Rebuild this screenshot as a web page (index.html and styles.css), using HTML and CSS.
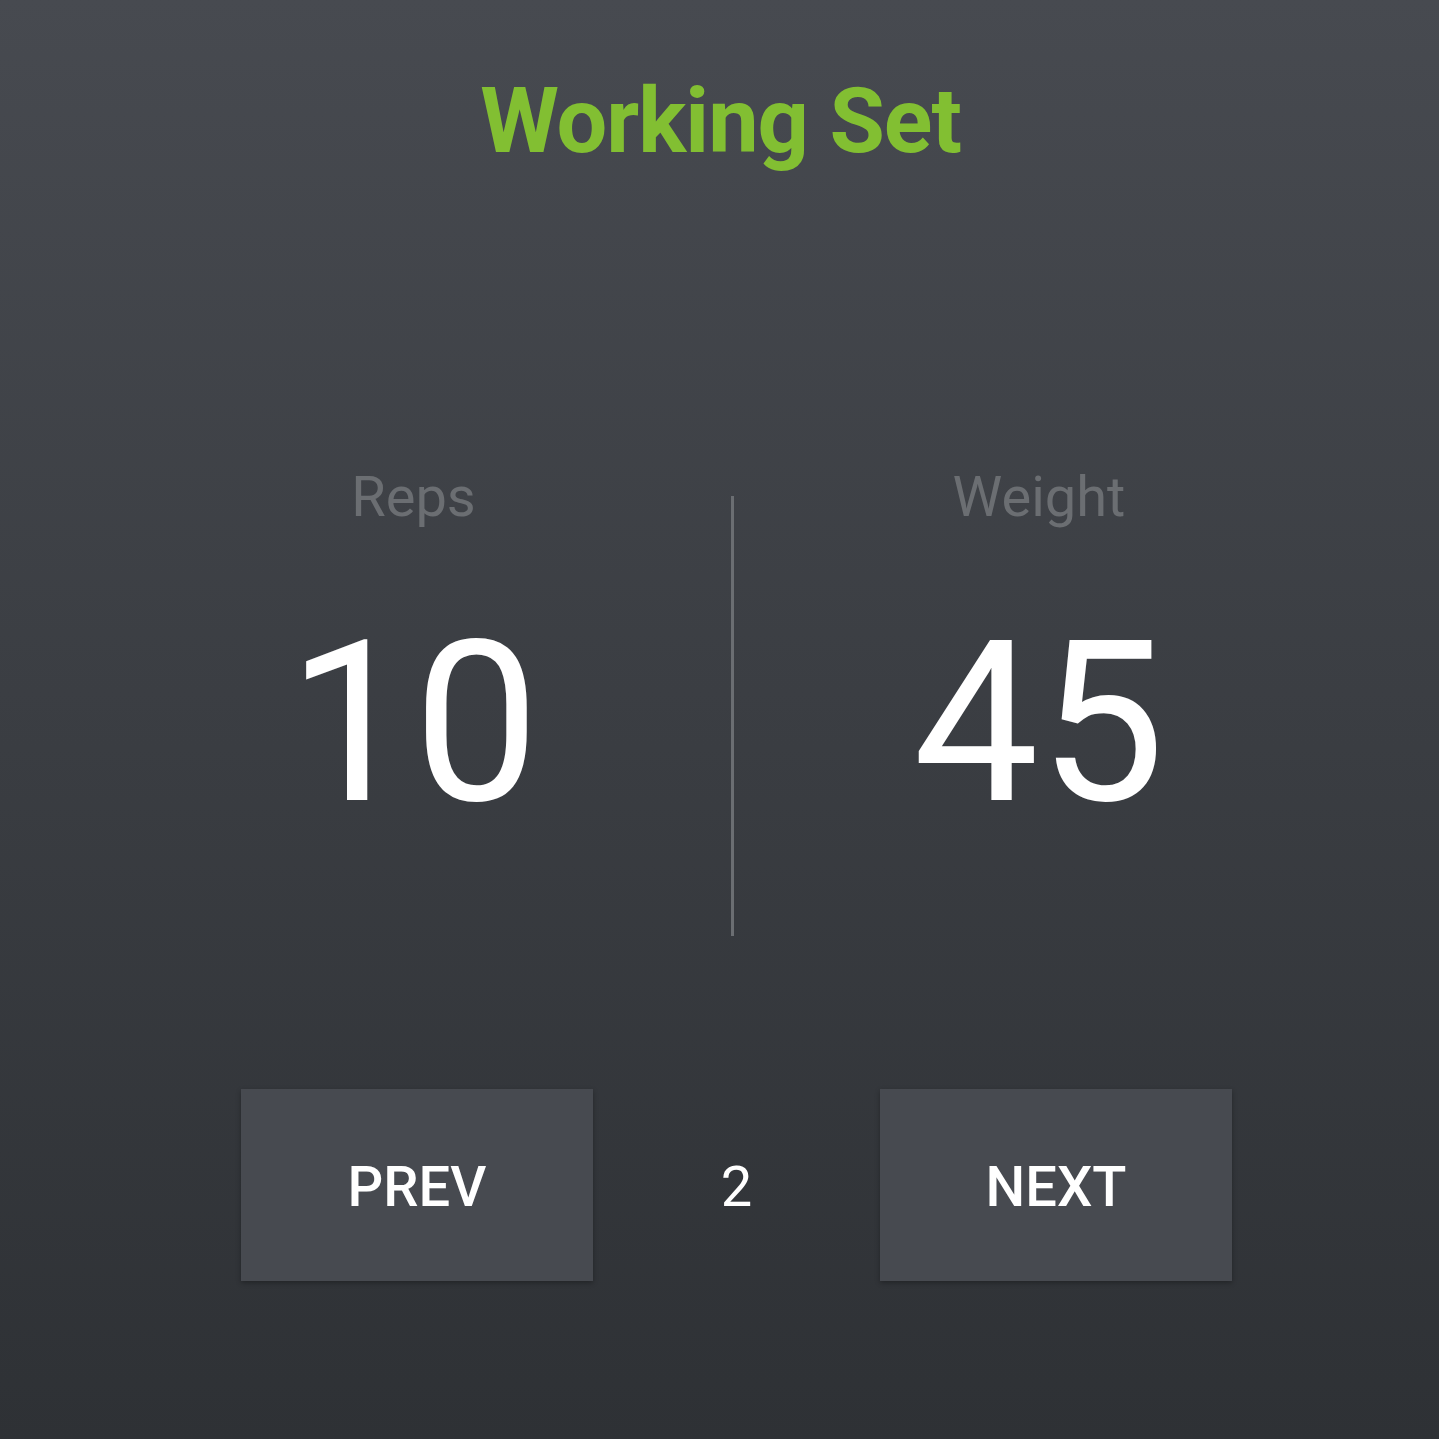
FILE: index.html
```html
<!DOCTYPE html>
<html>
<head>
<meta charset="utf-8">
<link rel="stylesheet" href="styles.css">
</head>
<body>
<main class="screen">
  <h1 class="title">Working Set</h1>
  <section class="stats">
    <div class="stat stat-left">
      <div class="stat-label">Reps</div>
      <div class="stat-value">10</div>
    </div>
    <div class="divider"></div>
    <div class="stat stat-right">
      <div class="stat-label">Weight</div>
      <div class="stat-value">45</div>
    </div>
  </section>
  <nav class="controls">
    <button class="btn">PREV</button>
    <div class="set-num">2</div>
    <button class="btn">NEXT</button>
  </nav>
</main>
</body>
</html>
```
FILE: styles.css
```css
html, body {
  margin: 0;
  padding: 0;
}
body {
  width: 1439px;
  height: 1439px;
  overflow: hidden;
  font-family: Roboto, "Noto Sans", sans-serif;
}
.screen {
  height: 1439px;
  box-sizing: border-box;
  background: linear-gradient(to bottom, #474a50 0%, #2e3135 100%);
  display: flex;
  flex-direction: column;
  padding-top: 77px;
}
.title {
  margin: 0;
  font-size: 90px;
  line-height: 90px;
  font-weight: 700;
  letter-spacing: -1px;
  color: #82bf32;
  text-align: center;
  padding-left: 2px;
}
.stats {
  display: flex;
  align-items: flex-start;
  margin-top: 302px;
  padding-left: 96px;
}
.stat {
  display: flex;
  flex-direction: column;
  align-items: center;
}
.stat-left { width: 635px; }
.stat-right { width: 610px; }
.stat-label {
  font-size: 56px;
  line-height: 56px;
  color: #6b6e72;
}
.stat-value {
  margin-top: 87px;
  font-size: 224px;
  line-height: 224px;
  color: #ffffff;
}
.divider {
  width: 3px;
  height: 440px;
  margin-top: 27px;
  background: #6b6e72;
}
.controls {
  display: grid;
  grid-template-columns: 352px 287px 352px;
  margin-top: 153px;
  margin-left: 241px;
}
.btn {
  height: 192px;
  border: none;
  margin: 0;
  padding: 0;
  background: #474a50;
  color: #ffffff;
  font-family: Roboto, "Noto Sans", sans-serif;
  font-size: 56px;
  font-weight: 500;
  box-shadow: 0 2px 5px rgba(0, 0, 0, 0.3);
  display: flex;
  align-items: center;
  justify-content: center;
  padding-top: 4px;
  box-sizing: border-box;
}
.set-num {
  display: flex;
  align-items: center;
  justify-content: center;
  font-size: 56px;
  color: #ffffff;
  padding-top: 4px;
}
```
